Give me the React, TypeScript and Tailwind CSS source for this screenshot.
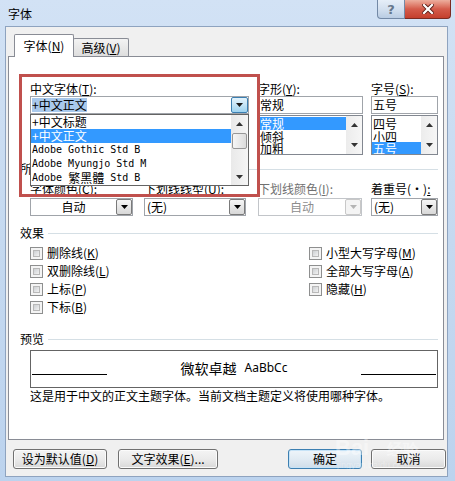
import React from "react";

function Acc({ k }: { k: string }) {
  return (
    <span>
      (<span className="underline underline-offset-[1px]">{k}</span>)
    </span>
  );
}

function Tri({ up = false, color = "#000" }: { up?: boolean; color?: string }) {
  return (
    <svg width="7" height="4" viewBox="0 0 7 4">
      <path d={up ? "M0 4 L3.5 0 L7 4 Z" : "M0 0 L7 0 L3.5 4 Z"} fill={color} />
    </svg>
  );
}

function Combo({
  cls,
  text,
  center = false,
  disabled = false,
}: {
  cls: string;
  text: string;
  center?: boolean;
  disabled?: boolean;
}) {
  return (
    <div
      className={`${cls} h-[18px] border ${
        disabled ? "border-[#c2c5c9]" : "border-[#a0a4aa]"
      } bg-white flex`}
    >
      <div
        className={`flex-1 flex items-center leading-[14px] ${
          center ? "justify-center" : "pl-[2px]"
        } ${disabled ? "text-[#8d8d8d]" : "text-black"}`}
      >
        {text}
      </div>
      <div
        className={`w-[16px] border rounded-[2px] flex items-center justify-center ${
          disabled
            ? "border-[#c8c8c8] bg-[#f4f4f4]"
            : "border-[#7a7a7a] bg-gradient-to-b from-[#f6f6f6] to-[#d8d8d8]"
        }`}
      >
        <Tri color={disabled ? "#b4b4b4" : "#000"} />
      </div>
    </div>
  );
}

function SmallList({ items, sel }: { items: string[]; sel: number }) {
  return (
    <div className="mt-[1px] h-[40px] border border-[#828790] bg-white flex overflow-hidden">
      <div className="flex-1 flex flex-col pt-[1px]">
        {items.map((t, i) => (
          <div
            key={i}
            className={`h-[12.5px] leading-[13px] pl-[1px] ${
              i === sel ? "bg-[#3399ff] text-white" : ""
            }`}
          >
            {t}
          </div>
        ))}
      </div>
      <div className="w-[16px] bg-gradient-to-r from-[#ececec] to-[#f6f6f6] flex flex-col justify-between items-center py-[7px]">
        <Tri up color="#333" />
        <Tri color="#333" />
      </div>
    </div>
  );
}

function Check({ label, k }: { label: string; k: string }) {
  return (
    <div className="h-[18px] flex items-center">
      <div className="w-[13px] h-[13px] border border-[#8e8f8f] bg-[#f4f4f4] p-[2px]">
        <div className="w-full h-full border border-[#b8b8b8] bg-gradient-to-br from-[#cdd0d3] to-[#f2f2f2]" />
      </div>
      <span className="ml-[4px] leading-[14px] whitespace-nowrap">
        {label}
        <Acc k={k} />
      </span>
    </div>
  );
}

function GroupHeader({ title, cls }: { title: string; cls: string }) {
  return (
    <div className={`${cls} flex items-center h-[14px] pl-[11px] pr-[5px]`}>
      <span className="leading-[14px] whitespace-nowrap">{title}</span>
      <div className="flex-1 h-px bg-[#d5dfe5] ml-[4px]" />
    </div>
  );
}

function Btn({ cls, children, def = false }: { cls: string; children: React.ReactNode; def?: boolean }) {
  return (
    <div
      className={`${cls} h-[20px] rounded-[3px] border flex items-center justify-center leading-[14px] whitespace-nowrap ${
        def
          ? "border-[#3c7fb1] bg-gradient-to-b from-[#eef5fa] via-[#e1ebf3] to-[#cfdde9] shadow-[inset_0_0_0_1px_#c6e3f7]"
          : "border-[#707070] bg-gradient-to-b from-[#f4f4f4] via-[#ebebeb] to-[#d8d8d8] shadow-[inset_0_0_0_1px_#fbfbfb]"
      }`}
    >
      {children}
    </div>
  );
}

const MONO = "font-['DejaVu_Sans_Mono',monospace] text-[10px]";

export default function App() {
  return (
    <div className="w-[455px] h-[481px] bg-gradient-to-b from-[#d2e2f5] via-[#c5d9f0] to-[#bcd3ee] flex flex-col font-['Noto_Sans_CJK_SC','Noto_Sans',sans-serif] text-[12px] text-black overflow-hidden relative">
      {/* title bar */}
      <div className="h-[26px] flex items-start shrink-0">
        <span className="ml-[8px] mt-[6px] leading-[16px]">字体</span>
        <div className="ml-auto mr-[4px] flex">
          <div className="w-[28px] h-[19px] border border-t-0 border-[#7389a6] rounded-bl-[4px] bg-gradient-to-b from-[#e6eef8] via-[#d3e0ef] to-[#b9cce3] flex items-center justify-center text-[#66778c] font-bold text-[13px] leading-none font-['DejaVu_Sans',sans-serif]">
            ?
          </div>
          <div className="w-[46px] h-[19px] border border-t-0 border-l-0 border-[#7b2b22] rounded-br-[4px] bg-gradient-to-b from-[#ecae9e] via-[#d45b4b] to-[#c43f2d] flex items-center justify-center">
            <svg width="12" height="10" viewBox="0 0 12 10">
              <path d="M2 1 L10 9 M10 1 L2 9" stroke="#5a1d16" strokeWidth="4" strokeLinecap="square" />
              <path d="M2 1 L10 9 M10 1 L2 9" stroke="#ffffff" strokeWidth="2.2" strokeLinecap="square" />
            </svg>
          </div>
        </div>
      </div>

      {/* body */}
      <div className="ml-[5px] w-[443px] h-[451px] bg-[#f0f0f0] border border-[#8ea3bf] flex flex-col pl-[2px] pt-[7px]">
        {/* tabs */}
        <div className="h-[22px] flex items-end pl-[6px]">
          <div className="relative z-10 w-[60px] h-[23px] -mb-[1px] bg-white border border-b-0 border-[#898c95] rounded-t-[2px] flex items-center justify-center leading-[14px]">
            字体<Acc k="N" />
          </div>
          <div className="w-[56px] h-[18px] -ml-[1px] border border-b-0 border-[#898c95] rounded-t-[2px] bg-gradient-to-b from-[#f3f3f3] to-[#dedede] flex items-center justify-center leading-[14px]">
            高级<Acc k="V" />
          </div>
        </div>

        {/* panel */}
        <div className="relative w-[436px] h-[384px] bg-white border border-[#898c95] flex flex-col">
          {/* row A */}
          <div className="flex pl-[21px] mt-[24px]">
            <div className="w-[219px]">
              <div className="h-[15px] leading-[15px] whitespace-nowrap">
                中文字体<Acc k="T" />:
              </div>
              <div className="h-[18px] border border-[#a0a4aa] bg-white flex">
                <div className="flex-1 flex items-center pl-[1px]">
                  <span className="bg-[#a9c9ec] leading-[14px] h-[14px]">+中文正文</span>
                </div>
                <div className="w-[17px] border border-[#3c7fb1] rounded-[2px] bg-gradient-to-b from-[#e4f3fc] via-[#c4e4f6] to-[#9dd3f0] flex items-center justify-center">
                  <Tri color="#1a1a1a" />
                </div>
              </div>
            </div>
            <div className="w-[105px] ml-[9px]">
              <div className="h-[15px] leading-[15px] whitespace-nowrap">
                字形<Acc k="Y" />:
              </div>
              <div className="h-[18px] border border-[#a0a4aa] bg-white flex items-center pl-[1px] leading-[14px]">
                常规
              </div>
              <SmallList items={["常规", "倾斜", "加粗"]} sel={0} />
            </div>
            <div className="w-[67px] ml-[8px]">
              <div className="h-[15px] leading-[15px] whitespace-nowrap">
                字号<Acc k="S" />:
              </div>
              <div className="h-[18px] border border-[#a0a4aa] bg-white flex items-center pl-[1px] leading-[14px]">
                五号
              </div>
              <SmallList items={["四号", "小四", "五号"]} sel={2} />
            </div>
          </div>

          {/* all text header */}
          <GroupHeader title="所有文字" cls="mt-[7px]" />

          {/* row C labels */}
          <div className="flex pl-[21px] mt-[5px] h-[15px] leading-[15px] whitespace-nowrap">
            <span className="w-[114px]">
              字体颜色<Acc k="C" />:
            </span>
            <span className="w-[114px]">
              下划线线型<Acc k="U" />:
            </span>
            <span className="w-[113px] text-[#707070]">
              下划线颜色<Acc k="I" />:
            </span>
            <span>
              着重号(·)<span className="underline">:</span>
            </span>
          </div>

          {/* row D combos */}
          <div className="flex pl-[21px] mt-[2px]">
            <Combo cls="w-[103px]" text="自动" center />
            <Combo cls="w-[102px] ml-[11px]" text="(无)" />
            <Combo cls="w-[104px] ml-[12px]" text="自动" center disabled />
            <Combo cls="w-[67px] ml-[9px]" text="(无)" />
          </div>

          {/* effects */}
          <GroupHeader title="效果" cls="mt-[10px]" />
          <div className="flex pl-[21px] mt-[4px]">
            <div className="w-[279px] flex flex-col">
              <Check label="删除线" k="K" />
              <Check label="双删除线" k="L" />
              <Check label="上标" k="P" />
              <Check label="下标" k="B" />
            </div>
            <div className="flex flex-col">
              <Check label="小型大写字母" k="M" />
              <Check label="全部大写字母" k="A" />
              <Check label="隐藏" k="H" />
            </div>
          </div>

          {/* preview */}
          <GroupHeader title="预览" cls="mt-[16px]" />
          <div className="mt-[4px] ml-[21px] w-[408px] h-[38px] border border-[#646464] flex items-start">
            <div className="w-[75px] h-px bg-black mt-[23px] ml-[1px]" />
            <div className="flex-1 flex justify-center items-center pt-[8px] leading-[18px] whitespace-nowrap">
              <span className="text-[14px]">微软卓越</span>
              <span className="ml-[8px] text-[12px] font-['Noto_Sans',sans-serif]">AaBbCc</span>
            </div>
            <div className="w-[75px] h-px bg-black mt-[23px] mr-[1px]" />
          </div>
          <div className="mt-[1px] pl-[21px] h-[14px] leading-[14px] whitespace-nowrap">
            这是用于中文的正文主题字体。当前文档主题定义将使用哪种字体。
          </div>

          {/* dropdown list overlay */}
          <div className="absolute left-[21px] top-[57px] w-[219px] h-[72px] border border-[#646464] bg-white flex">
            <div className="flex-1 flex flex-col">
              <div className="h-[14px] leading-[14px] pl-[1px]">+中文标题</div>
              <div className="h-[14px] leading-[14px] pl-[1px] bg-[#3399ff] text-white">+中文正文</div>
              <div className="h-[14px] leading-[14px] pl-[1px] flex items-center">
                <span className={MONO}>Adobe Gothic Std B</span>
              </div>
              <div className="h-[14px] leading-[14px] pl-[1px] flex items-center">
                <span className={MONO}>Adobe Myungjo Std M</span>
              </div>
              <div className="h-[14px] leading-[14px] pl-[1px] flex items-center whitespace-pre">
                <span className={MONO}>Adobe </span>
                <span>繁黑體</span>
                <span className={MONO}> Std B</span>
              </div>
            </div>
            <div className="w-[17px] bg-gradient-to-r from-[#e9e9e9] to-[#f5f5f5] flex flex-col">
              <div className="h-[17px] flex items-center justify-center">
                <Tri up color="#333" />
              </div>
              <div className="mt-[1px] mx-auto w-[15px] h-[16px] rounded-[2px] border border-[#979797] bg-gradient-to-r from-[#f6f6f6] to-[#dcdcdc]" />
              <div className="flex-1" />
              <div className="h-[17px] flex items-center justify-center">
                <Tri color="#333" />
              </div>
            </div>
          </div>

          {/* red annotation box */}
          <div className="absolute left-[10px] top-[17px] w-[241px] h-[123px] border-[3px] border-[#c0504d]" />
        </div>

        {/* buttons */}
        <div className="flex mt-[9px]">
          <Btn cls="ml-[5px] w-[94px]">
            设为默认值<Acc k="D" />
          </Btn>
          <Btn cls="ml-[11px] w-[100px]">
            文字效果<Acc k="E" />...
          </Btn>
          <Btn cls="ml-[70px] w-[74px]" def>
            确定
          </Btn>
          <Btn cls="ml-[9px] w-[75px]">取消</Btn>
        </div>
      </div>

      {/* watermark */}
      <div className="absolute left-[335px] top-[437px] text-white/40 text-[22px] leading-none font-['Liberation_Sans',sans-serif] font-bold pointer-events-none">
        Bai<span className="text-[16px] ml-[18px]">经验</span>
      </div>
      <div className="absolute left-[337px] top-[461px] text-white/35 text-[9px] leading-none font-['Liberation_Sans',sans-serif] pointer-events-none">
        jingyan.baidu.com
      </div>
    </div>
  );
}
